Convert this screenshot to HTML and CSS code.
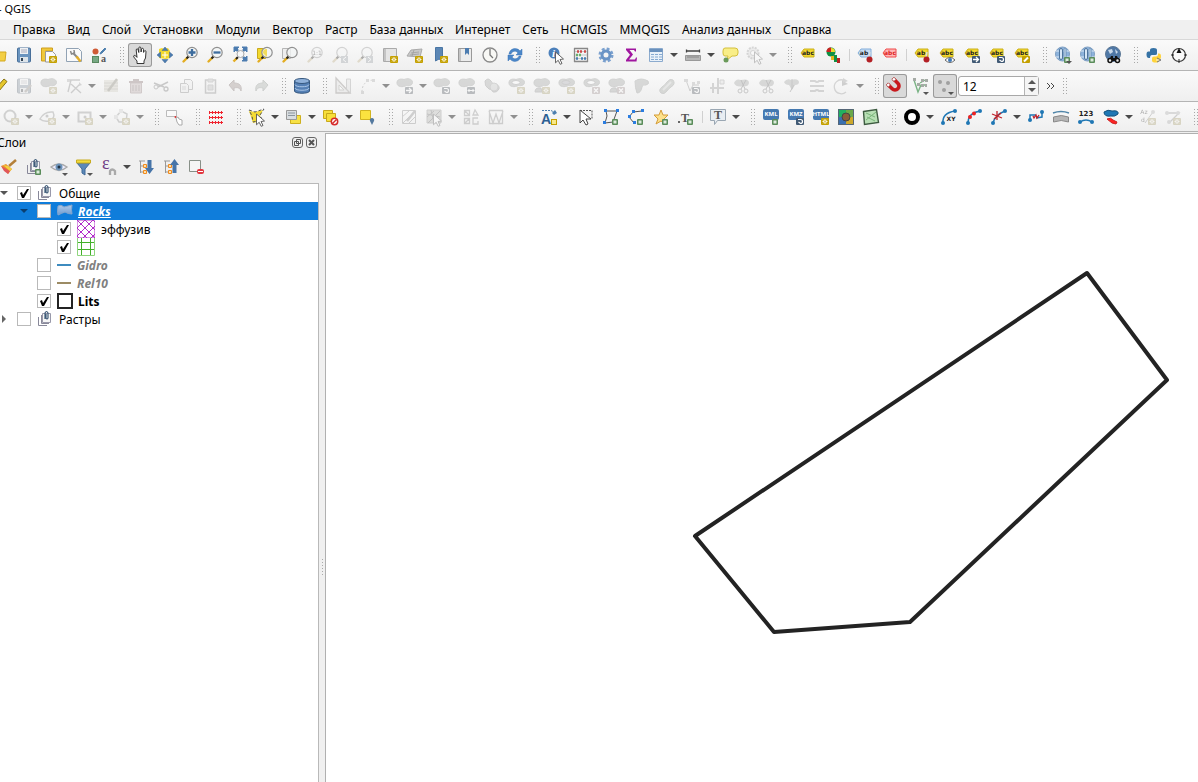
FILE: index.html
```html
<!DOCTYPE html>
<html lang="ru">
<head>
    <meta charset="utf-8">
    <meta name="viewport" content="width=device-width, initial-scale=1">
    <title>QGIS</title>
    <link rel="stylesheet" href="styles.css">
</head>
<body>
<svg class="sprite" aria-hidden="true">
    <defs>
        <linearGradient id="g-blue" x1="0" y1="0" x2="0" y2="1"><stop offset="0" stop-color="#b3cbe8"/><stop offset="1" stop-color="#6c9bd2"/></linearGradient>
        <pattern id="p-diag" width="8" height="8" patternUnits="userSpaceOnUse"><path d="M0 0l8 8M8 0L0 8" stroke="#b02fc9" stroke-width="1"/></pattern>
    </defs>

    <!-- badges -->
    <symbol id="b-star" viewBox="0 0 24 24"><rect x="12" y="13" width="8" height="7" rx="1" fill="#c4a000"/><path d="M16 14v5M13.500 16.500h5M14.200 14.700l3.600 3.600M17.800 14.700l-3.600 3.600" stroke="#fff" stroke-width=".9"/><circle cx="16" cy="16.500" r=".7" fill="#c4a000"/></symbol>
    <symbol id="b-plus" viewBox="0 0 24 24"><rect x="13" y="14" width="6" height="6" rx="1" fill="#5a8c5a"/><rect x="14.500" y="15.500" width="3" height="3" fill="#dcebdc"/></symbol>
    <symbol id="b-right" viewBox="0 0 24 24"><rect x="12" y="13" width="8" height="7" rx="1" fill="#415a75"/><path d="M13 16.500h5M16 14l2.500 2.500L16 19" stroke="#fff" stroke-width="1.300" fill="none"/></symbol>
    <symbol id="b-both" viewBox="0 0 24 24"><rect x="12" y="13" width="8" height="7" rx="1" fill="#415a75"/><path d="M13 16.500h6M14.500 15L13 16.500l1.500 1.500M17.500 15l1.500 1.500-1.500 1.500" stroke="#fff" fill="none"/></symbol>
    <symbol id="b-rot" viewBox="0 0 24 24"><rect x="12" y="13" width="8" height="7" rx="1" fill="#415a75"/><path d="M14 14.500h2.500a2 2 0 0 1 0 4L14.500 17" stroke="#fff" stroke-width="1.200" fill="none"/></symbol>
    <symbol id="b-x" viewBox="0 0 24 24"><rect x="12" y="13" width="8" height="7" rx="1" fill="#b88"/><path d="M14 14.500l4 4M18 14.500l-4 4" stroke="#fff" stroke-width="1.300"/></symbol>
    <symbol id="b-drop" viewBox="0 0 24 24"><path d="M15 18h6l-3 3z" fill="#555"/></symbol>
    <symbol id="tag" viewBox="0 0 24 24"><path d="M5 10l3-4h10v8H8z" fill="#f2d82c" stroke="#cbb01a"/></symbol>
    <symbol id="lens" viewBox="0 0 24 24"><path d="M5.500 18.500L10 14" stroke="#e3ad22" stroke-width="2.400" stroke-linecap="round"/><path d="M8.500 15.500l2-2" stroke="#222" stroke-width="2"/><circle cx="14" cy="9.500" r="5.200" fill="#f2f5f5" fill-opacity=".8" stroke="#909090" stroke-width="1.200"/></symbol>
    <symbol id="blob" viewBox="0 0 24 24"><path d="M4 9.500C3.500 5 8 4.500 11 5.500c3-1.500 8.500-1 8.500 3 0 3-4 3.500-6 3-4 2-9 1.500-9.500-2z" fill="#9ca39c" stroke="#8a918a"/></symbol>
    <symbol id="cursor" viewBox="0 0 24 24"><path d="M11.500 9l8 7-3.500.5 2 4-1.800.8-2-4-2.700 2.500z" fill="#fff" stroke="#555" stroke-width=".9"/></symbol>
    <symbol id="pencil" viewBox="0 0 24 24"><path d="M8 18l1-4 8-9 3 2.500-8 9.500z" fill="#e5c62c" stroke="#8a7514"/></symbol>

    <!-- project -->
    <symbol id="open" viewBox="0 0 24 24"><path d="M4 18V7h6l2 2h7l-1 9z" fill="#f3cf45" stroke="#d3a81f"/></symbol>
    <symbol id="save" viewBox="0 0 24 24"><rect x="5.500" y="5" width="13" height="14" rx="1" fill="#6a94bf" stroke="#486f99"/><path d="M8 5h8v6H8z" fill="#eef1f4"/><path d="M9 7h6M9 9h6" stroke="#aab"/><path d="M8 14h8v5H8z" fill="#dde4ea"/><path d="M9 15h2v3H9z" fill="#345"/></symbol>
    <symbol id="newproj" viewBox="0 0 24 24"><path d="M4.500 5h11v3h-7v10h-4z" fill="#f0c93b" stroke="#cf9e1c"/><path d="M8.500 8.500h7l3 3V19h-10z" fill="#fafafa" stroke="#999"/><use href="#b-star"/></symbol>
    <symbol id="layout" viewBox="0 0 24 24"><path d="M4.500 5.500h12l3 3V18.500h-15z" fill="#fafafa" stroke="#91a2b4"/><path d="M11 10l5 5" stroke="#888" stroke-width="2"/><path d="M14.500 13.500l4 5" stroke="#e3ae2a" stroke-width="2.500"/><path d="M8.500 8l1 3 3-1-.5-3" fill="none" stroke="#888" stroke-width="1.500"/></symbol>
    <symbol id="style" viewBox="0 0 24 24"><circle cx="8.500" cy="8.500" r="3" fill="#cf5a35"/><path d="M13 11l1-2 4-4 .8 1-3.800 4z" fill="#4d7fae" stroke="#4d7fae"/><rect x="5.500" y="13.500" width="6" height="6" fill="#77a883" stroke="#58885f"/></symbol>

    <!-- navigation -->
    <symbol id="hand" viewBox="0 0 24 24"><path d="M9 20.500v-2.500l-3.200-4c-.8-1.600 1-2.200 1.900-1.100l1.300 1.500-.8-7.400c0-1.600 1.800-1.700 2 0l.6 2.500V5c.1-1.500 2-1.500 2.100 0l.2 4 .4-2.800c.3-1.300 2-1.200 2 .2l.1 3 .6-1.200c.5-1.100 1.900-.6 1.800.6L17.500 15l-1.500 3v2.500z" fill="#fff" stroke="#222" stroke-width=".9"/></symbol>
    <symbol id="pansel" viewBox="0 0 24 24"><path d="M6 6l3-1 2 1 4-1 2 3v7l-4 1-7-1z" fill="#f2d92e"/><path d="M12 4l3 3.500H9zM12 20l3-3.500H9zM4 12l3.500-3v6zM20 12l-3.500-3v6z" fill="#4c7cb0" stroke="#3c6695" stroke-width=".5"/><path d="M12 9v6M9 12h6" stroke="#fff"/></symbol>
    <symbol id="zin" viewBox="0 0 24 24"><use href="#lens"/><path d="M14 6v7M10.500 9.500h7" stroke="#3e6d9e" stroke-width="2.300"/></symbol>
    <symbol id="zout" viewBox="0 0 24 24"><use href="#lens"/><path d="M10.500 9.500h7" stroke="#3e6d9e" stroke-width="2.300"/></symbol>
    <symbol id="zfull" viewBox="0 0 24 24"><path d="M6 4h5L6 9zM19 4v5l-5-5zM19 18h-5l5-5z" fill="#4c7cb0" stroke="#4c7cb0"/><path d="M7 5l3 3M18 5l-3 3M18 17l-3-3" stroke="#4c7cb0" stroke-width="2.500"/><path d="M5.500 18.500l4-4" stroke="#e3ad22" stroke-width="2.400"/><path d="M8 16l2-2" stroke="#222" stroke-width="2"/><circle cx="12.500" cy="11" r="3.500" fill="#f5f7f9" stroke="#aaa"/></symbol>
    <symbol id="zsel" viewBox="0 0 24 24"><path d="M4.500 5.500h8v10h-8z" fill="#f2d92e" stroke="#c9a91c"/><use href="#lens"/><path d="M10 10a4 4 0 0 1 4-4v8z" fill="#f2dc5a"/></symbol>
    <symbol id="zlayer" viewBox="0 0 24 24"><path d="M4.500 5.500h8v10h-8z" fill="#eee" stroke="#b5b5b5"/><use href="#lens"/></symbol>
    <symbol id="zlast" viewBox="0 0 24 24"><use href="#lens"/><rect x="13" y="13" width="7" height="7" fill="#8aa0b5"/><path d="M18 14l-3 2.500 3 2.500" stroke="#fff" fill="none"/></symbol>
    <symbol id="znext" viewBox="0 0 24 24"><use href="#lens"/><rect x="13" y="13" width="7" height="7" fill="#8aa0b5"/><path d="M15 14l3 2.500-3 2.500" stroke="#fff" fill="none"/></symbol>
    <symbol id="newmap" viewBox="0 0 24 24"><path d="M5.500 5.500h13v13h-13z" fill="#e5e5e5" stroke="#aaa"/><path d="M6 6h2v12H6z" fill="#c4c4c4"/><use href="#b-star"/></symbol>
    <symbol id="new3d" viewBox="0 0 24 24"><path d="M4 13l4-6 11-1-2 8z" fill="#c9c9c9" stroke="#aaa"/><path d="M8 10l8-1M7 12l9-1M11 7l-2 6" stroke="#999" stroke-width=".7"/><use href="#b-star"/></symbol>
    <symbol id="bookadd" viewBox="0 0 24 24"><path d="M7.500 4.500h7V18L11 16l-3.500 2z" fill="#5c87b5" stroke="#4a76a5"/><use href="#b-star"/></symbol>
    <symbol id="books" viewBox="0 0 24 24"><path d="M5.500 5.500h13v13h-13z" fill="#ececec" stroke="#999"/><path d="M6 6h2v12H6z" fill="#c4c4c4"/><path d="M12 5h4v7l-2-2-2 2z" fill="#4c7cb0"/></symbol>
    <symbol id="clock" viewBox="0 0 24 24"><circle cx="12" cy="12" r="7" fill="#f8f8f5" stroke="#898989" stroke-width="1.300"/><path d="M12 6v6l3 3" stroke="#777" fill="none" stroke-width="1.300"/></symbol>
    <symbol id="refresh" viewBox="0 0 24 24"><path d="M6 11c1-6 8-7 11-3l2-2v6h-6l2-2c-2-3-6-2-7 1zM18 13c-1 6-8 7-11 3l-2 2v-6h6l-2 2c2 3 6 2 7-1z" fill="#4b87c9" stroke="#3973b4" stroke-width=".5"/></symbol>

    <!-- attributes -->
    <symbol id="info" viewBox="0 0 24 24"><circle cx="10" cy="10" r="5.500" fill="#4c80bb"/><use href="#cursor"/></symbol>
    <symbol id="abacus" viewBox="0 0 24 24"><path d="M5.500 5v14M18.500 5v14M5 5.500h14M5 18.500h14" stroke="#888" stroke-width="1.300"/><path d="M6 8.500h12M6 12h12M6 15.500h12" stroke="#bbb" stroke-width=".8"/><path d="M8 8.500h5M15 8.500h3" stroke="#cc4a4a" stroke-width="2.500" stroke-dasharray="2 1"/><path d="M7 12h6" stroke="#6bb06b" stroke-width="2.500" stroke-dasharray="2 1"/><path d="M7 15.500h2M12 15.500h5" stroke="#487fb4" stroke-width="2.500" stroke-dasharray="2 1"/></symbol>
    <symbol id="gear" viewBox="0 0 24 24"><circle cx="12" cy="12" r="6" fill="none" stroke="#7ba1cf" stroke-width="3" stroke-dasharray="2.700 2"/><circle cx="12" cy="12" r="4" fill="none" stroke="#6a94c6" stroke-width="3"/></symbol>
    <symbol id="sigma" viewBox="0 0 24 24"><path d="M7 5.500h10v3h-1l-1-1.500h-4.500l3.500 4.500-4 5h6l1-2h1l-.5 4H7V17l4-5.200L7 7z" fill="#a0169f"/></symbol>
    <symbol id="table" viewBox="0 0 24 24"><path d="M5.500 5.500h13v13h-13z" fill="#e9f1f9" stroke="#8cabce"/><path d="M5.500 6h13v3h-13z" fill="#6a91bd"/><path d="M7 11.500h3M11 11.500h3M15 11.500h3M7 14h3M11 14h3M15 14h3M7 16.500h3M11 16.500h3M15 16.500h3" stroke="#86aad1"/></symbol>
    <symbol id="measure" viewBox="0 0 24 24"><path d="M5 8h14M5.500 6.500v3M18.500 6.500v3" stroke="#444" stroke-width="1.300"/><path d="M4.500 12.500h15v5h-15z" fill="#b6b6b6" stroke="#999"/><path d="M7 13v2M9 13v2M11 13v2M13 13v2M15 13v2M17 13v2" stroke="#777" stroke-width=".7"/></symbol>
    <symbol id="tip" viewBox="0 0 24 24"><path d="M7 5h10q3 0 3 3v2q0 3-3 3h-3l-5 4 1-4H7q-2 0-2-3V8q0-3 2-3z" fill="#f9ee88" stroke="#d4c03c"/><circle cx="8" cy="17" r="2.500" fill="#6a9a5a"/></symbol>
    <symbol id="locate" viewBox="0 0 24 24"><circle cx="10" cy="10" r="5.500" fill="#d8d8d8" stroke="#999" stroke-width="2" stroke-dasharray="2 1"/><circle cx="10" cy="10" r="2.500" fill="#fff" stroke="#999"/><use href="#cursor"/></symbol>

    <!-- labels -->
    <symbol id="pie" viewBox="0 0 24 24"><circle cx="10" cy="9" r="4.500" fill="#0f9144"/><path d="M10 9V5a4 4 0 0 1 4 4z" fill="#f2d92e"/><path d="M10 9H5.500A4 4 0 0 1 10 4.500z" fill="#c22"/><path d="M10 13h3v4h-3z" fill="#e3b81c"/><path d="M13 12h3v7h-3z" fill="#0f9144"/><path d="M16 15h3v5h-3z" fill="#b22"/></symbol>
    <symbol id="tagblue" viewBox="0 0 24 24"><path d="M5 10l3-4h10v8H8z" fill="#c7ddf3" stroke="#82addb"/></symbol>
    <symbol id="tagred" viewBox="0 0 24 24"><path d="M5 10l3-4h10v8H8z" fill="#ffb7b7" stroke="#f04b4b"/></symbol>
    <symbol id="pin" viewBox="0 0 24 24"><path d="M16 14l1-5" stroke="#ddd" stroke-width="1.500"/><circle cx="16.500" cy="16.500" r="3" fill="#b32025"/></symbol>
    <symbol id="tageye" viewBox="0 0 24 24"><use href="#tag"/><path d="M10 17q5-5 10 0-5 5-10 0z" fill="#fff" stroke="#666"/><circle cx="15" cy="17" r="2" fill="#3f79b8"/></symbol>
    <symbol id="tagmove" viewBox="0 0 24 24"><use href="#tag"/><use href="#b-right"/></symbol>
    <symbol id="tagrot" viewBox="0 0 24 24"><use href="#tag"/><use href="#b-rot"/></symbol>
    <symbol id="tagedit" viewBox="0 0 24 24"><use href="#tag"/><rect x="12" y="13" width="8" height="7" rx="1" fill="#c4a000"/><path d="M14 18.500l4-4" stroke="#fff" stroke-width="2"/></symbol>

    <!-- web and plugins -->
    <symbol id="globe" viewBox="0 0 24 24"><circle cx="11.500" cy="11" r="7" fill="#8db3dc" stroke="#7f9fc2"/><path d="M5 8h13M5 14h13" stroke="#dce9f5"/><rect x="8.500" y="5.500" width="3" height="11" rx="1.500" fill="#d7e7f7" stroke="#4f759d"/><rect x="13" y="5.500" width="2" height="11" rx="1" fill="#d7e7f7" stroke="#6f93b8"/></symbol>
    <symbol id="globeadd" viewBox="0 0 24 24"><use href="#globe"/><use href="#b-plus"/><use href="#b-drop"/></symbol>
    <symbol id="globesearch" viewBox="0 0 24 24"><use href="#globe"/><use href="#b-plus"/></symbol>
    <symbol id="binoc" viewBox="0 0 24 24"><circle cx="12" cy="11" r="7.500" fill="#4f78a6" stroke="#5c7896"/><path d="M7 7l4-1 1 3-3 2zM14 6l3 3-2 2z" fill="#c9d9ea"/><path d="M8 18l2-5h2v2h2v-2h2l2 5z" fill="#111"/><circle cx="9" cy="17.500" r="2" fill="#eee" stroke="#111" stroke-width="1.500"/><circle cx="16.500" cy="17.500" r="2" fill="#eee" stroke="#111" stroke-width="1.500"/></symbol>
    <symbol id="python" viewBox="0 0 24 24"><path d="M8 8.500V7q0-2 3.500-2T15 7v3.500q0 1.500-2 1.500h-3q-2 0-2 3H7q-2.500 0-2.500-3.500T7 8.500h4.500" fill="#3572a5"/><path d="M10 15.500v2q0 2 3.500 2t3.500-2h-3v-1h3q2 0 2-3t-2-3h-1v1q0 2-2 2h-2q-2 0-2 2z" fill="#ffd43b"/><path d="M15 15l4 2-4 2" fill="none" stroke="#777"/></symbol>
    <symbol id="compass" viewBox="0 0 24 24"><circle cx="12" cy="12" r="6.500" fill="#fafafa" stroke="#333" stroke-width="1.200"/><path d="M12 5l2.500 5h-5z" fill="#111"/><path d="M12 16v4M4 12h3M17 12h3" stroke="#222"/></symbol>

    <!-- digitizing -->
    <symbol id="savee" viewBox="0 0 24 24"><use href="#save"/><path d="M13 18l6-7" stroke="#987" stroke-width="2.500"/></symbol>
    <symbol id="blobstar" viewBox="0 0 24 24"><use href="#blob"/><use href="#b-star"/></symbol>
    <symbol id="vertex" viewBox="0 0 24 24"><path d="M6 6h12M6 18L9 6M9 10l10 9M18 10l-9 9" stroke="#888" stroke-width="1.400"/><rect x="5" y="5" width="3" height="3" fill="#aaa"/><path d="M17 8l3 3-3 1z" fill="#999"/></symbol>
    <symbol id="multiedit" viewBox="0 0 24 24"><path d="M5 6h14v12H5z" fill="#d9cfa8"/><path d="M5 9h14M5 12h14M5 15h14" stroke="#b0a67c"/><path d="M9 17l9-12" stroke="#8a8050" stroke-width="2.500"/></symbol>
    <symbol id="trash" viewBox="0 0 24 24"><path d="M6.500 9h11v10h-11z" fill="#dba5a5" stroke="#b57777"/><path d="M5 8h14M9 6h6" stroke="#a66" stroke-width="2"/><path d="M9 11v6M12 11v6M15 11v6" stroke="#966"/></symbol>
    <symbol id="cut" viewBox="0 0 24 24"><path d="M5 9l10 4M19 8L9 13" stroke="#777" stroke-width="1.500"/><circle cx="17" cy="15" r="2" fill="none" stroke="#777" stroke-width="1.300"/><circle cx="7" cy="13" r="2" fill="none" stroke="#777"/></symbol>
    <symbol id="copy" viewBox="0 0 24 24"><path d="M10.500 5.500h6l2 2v8h-8z" fill="#eee" stroke="#888"/><path d="M6.500 9.500h6l2 2v7h-8z" fill="#eee" stroke="#888"/><path d="M8 13h4M8 15h4" stroke="#aaa"/></symbol>
    <symbol id="paste" viewBox="0 0 24 24"><path d="M6.500 6h10v13h-10z" fill="#eee" stroke="#888" stroke-width="1.500"/><path d="M9 5h5v3H9zM9 11h5v5H9z" fill="#bbb" stroke="#999"/></symbol>
    <symbol id="undo" viewBox="0 0 24 24"><path d="M5 11l5-5v3c6 0 8 3 7 8-1-3-3-4-7-3v3z" fill="#b5857a" stroke="#97685f"/></symbol>
    <symbol id="redo" viewBox="0 0 24 24"><path d="M19 11l-5-5v3c-6 0-8 3-7 8 1-3 3-4 7-3v3z" fill="#9db0a0" stroke="#7d9181"/></symbol>
    <symbol id="db" viewBox="0 0 24 24"><path d="M4.500 7v10c0 3 15 3 15 0V7z" fill="#5580b5" stroke="#36587f"/><ellipse cx="12" cy="7" rx="7.500" ry="2.500" fill="#8fb1da" stroke="#36587f"/><path d="M5 10.500c0 3 14 3 14 0M5 14c0 3 14 3 14 0" fill="none" stroke="#a9c5e6"/></symbol>
    <symbol id="setsq" viewBox="0 0 24 24"><path d="M5 4v15h14z" fill="#ddd" stroke="#8d7d72" stroke-width="1.300"/><path d="M8 11v5h5z" fill="#fff" stroke="#998"/><path d="M15.500 5h4v14l-4-4z" fill="#ddd" stroke="#999"/></symbol>
    <symbol id="curve" viewBox="0 0 24 24"><path d="M6 18Q6 7 17 6" fill="none" stroke="#888" stroke-dasharray="2 2"/><path d="M5 17h3v3H5zM10 5h3v3h-3zM16 5h3v3h-3z" fill="#aaa"/></symbol>
    <symbol id="blobmove" viewBox="0 0 24 24"><use href="#blob"/><use href="#b-right"/></symbol>
    <symbol id="blobboth" viewBox="0 0 24 24"><use href="#blob"/><use href="#b-both"/></symbol>
    <symbol id="blobrot" viewBox="0 0 24 24"><use href="#blob"/><use href="#b-rot"/></symbol>
    <symbol id="ringx" viewBox="0 0 24 24"><use href="#blob"/><ellipse cx="11" cy="8.500" rx="4" ry="2" fill="#fff" stroke="#888"/><use href="#b-x"/></symbol>
    <symbol id="simplify" viewBox="0 0 24 24"><path d="M5 7q3-4 6 0 1 3 4 3 5 1 4 5-2 4-6 3-1-3-4-3-5-3-4-8z" fill="#a0a6a0" stroke="#888"/><circle cx="14" cy="13" r="4" fill="#c2c6c2" stroke="#999"/></symbol>
    <symbol id="ring" viewBox="0 0 24 24"><use href="#blob"/><ellipse cx="11" cy="8.500" rx="4" ry="2" fill="#fff" stroke="#888"/><use href="#b-star"/></symbol>
    <symbol id="ringfill" viewBox="0 0 24 24"><use href="#blob"/><ellipse cx="11" cy="8.500" rx="4" ry="2" fill="#aab" stroke="#888"/><use href="#b-star"/></symbol>
    <symbol id="part" viewBox="0 0 24 24"><use href="#blob"/><path d="M5 18q0-5 6-4l1 4z" fill="#a0a6a0" stroke="#888"/><use href="#b-star"/></symbol>
    <symbol id="partx" viewBox="0 0 24 24"><use href="#blob"/><path d="M5 18q0-5 6-4l1 4z" fill="#a0a6a0" stroke="#888"/><use href="#b-x"/></symbol>
    <symbol id="reshape" viewBox="0 0 24 24"><path d="M5 7q6-4 13 0 2 3-2 4-4-1-4 2-1 6-5 6-2-5-2-12z" fill="#9ca39c" stroke="#8a918a"/></symbol>
    <symbol id="offset" viewBox="0 0 24 24"><path d="M6 19q-3-3 1-6 3-2 5-5 3-4 6-2 3 4-2 7-3 2-4 4-3 4-6 2z" fill="#9cab98" stroke="#8a918a"/><path d="M8 16q4-4 8-8" stroke="#c9cfc9" stroke-width="2"/></symbol>
    <symbol id="nodes" viewBox="0 0 24 24"><path d="M6 6l4 11 3-6h6" stroke="#888" fill="none"/><path d="M4 5h4v3H4zM12 8h3v3h-3zM17 7h3v3h-3z" fill="#aaa"/><use href="#b-rot"/></symbol>
    <symbol id="trim" viewBox="0 0 24 24"><path d="M5 14h14M13 4v16M8 9v10" stroke="#999" stroke-width="2"/><path d="M15 6h4v4h-4z" fill="#ddd" stroke="#999"/></symbol>
    <symbol id="split" viewBox="0 0 24 24"><path d="M4 9q2-5 7-3 8-2 8 3-1 4-5 3-8 2-10-3z" fill="#9ca39c"/><path d="M11 6l4 9M16 6l-5 9" stroke="#666"/><circle cx="10" cy="17" r="2" fill="none" stroke="#777"/><circle cx="16" cy="17" r="2" fill="none" stroke="#777"/></symbol>
    <symbol id="merge" viewBox="0 0 24 24"><path d="M4 8q3-4 7-2 7-2 8 2 0 3-4 3l-3 5-3-5q-4 0-5-3z" fill="#9ca39c"/><path d="M12 5v10M14 11l-4 7" stroke="#777"/></symbol>
    <symbol id="align" viewBox="0 0 24 24"><path d="M5 7h5q2 2 4 0h5M5 12h14M5 17h5q2-2 4 0h5" stroke="#999" stroke-width="2" fill="none"/></symbol>
    <symbol id="rotsym" viewBox="0 0 24 24"><path d="M16 18A7 7 0 1 1 13 6" fill="none" stroke="#999" stroke-width="1.300"/><path d="M12 6v6l6-2z" fill="#888"/><path d="M13 4l5 3-5 2" fill="#999"/></symbol>

    <!-- snapping -->
    <symbol id="magnet" viewBox="0 0 24 24"><g transform="rotate(-45 12 12)"><path d="M8 6v6a4 4 0 0 0 8 0V6" fill="none" stroke="#c8191d" stroke-width="3.600"/><path d="M6.500 5h3v3h-3zM14.500 5h3v3h-3z" fill="#fff" stroke="#a44" stroke-width=".8"/></g></symbol>
    <symbol id="snapv" viewBox="0 0 24 24"><path d="M6 6l4 12 3-7h6M12 9l5-3" stroke="#7ab384" stroke-width="1.400" fill="none"/><path d="M5 4h3v3H5zM9 9h3v3H9zM13 5h3v3h-3zM17 5h3v3h-3zM13 10h3v3h-3zM17 10h2v3h-2z" fill="#a5aaa5"/><use href="#b-drop"/></symbol>
    <symbol id="snapdots" viewBox="0 0 24 24"><circle cx="7" cy="8" r="2" fill="#a0a0a0"/><circle cx="15" cy="9" r="2" fill="#a0a0a0"/><circle cx="11" cy="16" r="2" fill="#a0a0a0"/><use href="#b-drop"/></symbol>

    <!-- shapes and selection -->
    <symbol id="circ" viewBox="0 0 24 24"><circle cx="11" cy="11" r="5.500" fill="none" stroke="#8a8f8a" stroke-width="2"/><use href="#b-star"/></symbol>
    <symbol id="ell" viewBox="0 0 24 24"><path d="M4 14Q8 6 17 7q3 6-4 9-6 1-9-2z" fill="none" stroke="#8a8f8a" stroke-width="1.500"/><circle cx="11" cy="11" r="1.500" fill="#888"/><use href="#b-star"/></symbol>
    <symbol id="rectd" viewBox="0 0 24 24"><path d="M5.500 7.500h12v9h-12z" fill="none" stroke="#8a8f8a" stroke-width="2"/><circle cx="12" cy="12" r="1.500" fill="#888"/><use href="#b-star"/></symbol>
    <symbol id="poly" viewBox="0 0 24 24"><path d="M6 12l5-6 6 3-1 8H9z" fill="none" stroke="#8a8f8a" stroke-width="1.500"/><path d="M4 10h4v4H4zM9 4h4v4H9z" fill="#ccc"/><use href="#b-star"/></symbol>
    <symbol id="taptool" viewBox="0 0 24 24"><path d="M3.500 5.500h10v6h-10z" fill="#fafafa" stroke="#bbb"/><circle cx="12.500" cy="12" r="1" fill="#d33"/><path d="M13 13l1 4 2 3h3v-5l-3-1-1-2z" fill="#fff" stroke="#aaa"/></symbol>
    <symbol id="redgrid" viewBox="0 0 24 24"><path d="M5 7.500h14M5 12.500h14M5 17.500h14" stroke="#f0222d"/><path d="M5 7.500h14M5 12.500h14M5 17.500h14" stroke="#f0222d" stroke-width="3" stroke-dasharray="1 2"/></symbol>
    <symbol id="selpoly" viewBox="0 0 24 24"><path d="M4 6l6 1 8-2-3 6 2 5-9 2-2-6z" fill="#f3db35"/><path d="M4 5l6 2 9-3-4 6 2 5-9 2-1-6z" fill="none" stroke="#555" stroke-dasharray="3 2"/><use href="#cursor"/></symbol>
    <symbol id="selform" viewBox="0 0 24 24"><path d="M8.500 10.500h10v8h-10z" fill="#f7e145" stroke="#ceb01f"/><path d="M4.500 5.500h10v9h-10z" fill="#d9dde0" stroke="#999"/><path d="M6 8h7M6 10.500h7" stroke="#8a959e"/></symbol>
    <symbol id="desel" viewBox="0 0 24 24"><path d="M4.500 5.500h9v8h-9z" fill="#f7df3a" stroke="#c8a81c"/><path d="M7.500 8.500h9v8h-9z" fill="#f7df3a" stroke="#c8a81c"/><circle cx="15.500" cy="16.500" r="3.200" fill="#fff" stroke="#d62b2b" stroke-width="1.500"/><path d="M13.500 18.500l4-4" stroke="#d62b2b" stroke-width="1.500"/></symbol>
    <symbol id="selloc" viewBox="0 0 24 24"><path d="M4.500 5.500h10v9h-10z" fill="#fbe33f" stroke="#d1b421"/><path d="M16 20l-2-4a2.200 2.200 0 1 1 4 0z" fill="#54799f"/></symbol>
    <symbol id="mesh" viewBox="0 0 24 24"><path d="M5.500 5.500h13v13h-13zM5 12l7-6M6 18L18 6M12 18l6-6" fill="none" stroke="#888"/><path d="M10 16l8-10" stroke="#888" stroke-width="2.500"/></symbol>
    <symbol id="meshsel" viewBox="0 0 24 24"><path d="M5 5h14v13H5z" fill="#b5b5a5" stroke="#888"/><path d="M5 12l7-6M6 18L18 6M9 5l3 13M5 9l13 3" stroke="#666" fill="none"/><use href="#cursor"/></symbol>
    <symbol id="meshrot" viewBox="0 0 24 24"><path d="M5.500 5.500h5v5h-5zM5.500 13.500h5v5h-5zM6 6l4 4M6 18l4-4M14 10l2-5 3 5zM19 13h-5v6h5v-3" fill="none" stroke="#888" stroke-width="1.300"/></symbol>
    <symbol id="meshw" viewBox="0 0 24 24"><path d="M5.500 5.500h13v13h-13zM5 6l4 12 3-9 3 9 4-12" fill="none" stroke="#888" stroke-width="1.300"/></symbol>

    <!-- annotations -->
    <symbol id="textnew" viewBox="0 0 24 24"><path d="M5 5.500h9l4 2" stroke="#4d7fae" stroke-dasharray="2 1" fill="none"/><path d="M15 8l3-3 2 3-3 2z" fill="#4d7fae"/><rect x="14.500" y="14.500" width="5" height="5" fill="#f7e88a" stroke="#c4a000"/></symbol>
    <symbol id="modann" viewBox="0 0 24 24"><path d="M6 5.500h12v9" fill="none" stroke="#555" stroke-dasharray="2 1"/><path d="M6 5v13l3-3 3 5 2-1-2-5h5z" fill="#fff" stroke="#444"/></symbol>
    <symbol id="polyann" viewBox="0 0 24 24"><path d="M7 6h11l-4 11-8 1 2-7z" fill="none" stroke="#555"/><path d="M5 4h3v3H5zM17 4h3v3h-3zM4 16h3v3H4z" fill="#2b7de0"/><use href="#b-plus"/></symbol>
    <symbol id="lineann" viewBox="0 0 24 24"><path d="M18 6L9 7l-4 5 5 6" fill="none" stroke="#555"/><path d="M17 4h3v3h-3zM8 5h3v3H8zM4 10h3v3H4zM9 16h3v3H9z" fill="#2b7de0"/><use href="#b-plus"/></symbol>
    <symbol id="starann" viewBox="0 0 24 24"><path d="M12 5l2 5h5l-4 4 1 5-4-3-5 3 2-5-4-4h5z" fill="#fde18a" stroke="#d49c38"/><use href="#b-plus"/></symbol>
    <symbol id="tann" viewBox="0 0 24 24"><path d="M4 17h2" stroke="#666" stroke-width="2"/><use href="#b-plus"/></symbol>
    <symbol id="balloon" viewBox="0 0 24 24"><path d="M4.500 4.500h15v11h-8l-3 4v-4h-4z" fill="#e8edf2" stroke="#9aa7b3"/></symbol>

    <!-- export -->
    <symbol id="kml" viewBox="0 0 24 24"><rect x="4" y="4" width="16" height="11" rx="2" fill="#4579b0"/><use href="#b-plus"/></symbol>
    <symbol id="kmz" viewBox="0 0 24 24"><rect x="4" y="4" width="16" height="11" rx="2" fill="#4579b0"/><use href="#b-rot"/></symbol>
    <symbol id="html" viewBox="0 0 24 24"><rect x="4" y="4" width="16" height="11" rx="2" fill="#4579b0"/><use href="#b-star"/></symbol>
    <symbol id="tiles" viewBox="0 0 24 24"><path d="M4 4h8v8H4z" fill="#22b060"/><path d="M12 4h8v8h-8z" fill="#6aa84a"/><path d="M4 12h8v8H4z" fill="#3a70b0"/><path d="M12 12h8v8h-8z" fill="#cda82b"/><circle cx="12" cy="12" r="4" fill="#8a5c3a" stroke="#444"/><path d="M4.500 4.500h15v15h-15z" fill="none" stroke="#567"/></symbol>
    <symbol id="map" viewBox="0 0 24 24"><path d="M4.500 6.500l13-2 2 13-14 2z" fill="#b8dfb5" stroke="#3d5a40" stroke-width="1.400"/><path d="M7 8l9 4M7 15l10-8M8 12l8 4" stroke="#79b57a"/></symbol>

    <!-- geometry plugin -->
    <symbol id="oring" viewBox="0 0 24 24"><circle cx="12" cy="12" r="6" fill="#fff" stroke="#000" stroke-width="4"/></symbol>
    <symbol id="arcxy" viewBox="0 0 24 24"><path d="M6 18Q5 8 18 6" fill="none" stroke="#1f77b4" stroke-width="1.500"/><circle cx="6" cy="18" r="2" fill="#1f77b4"/><circle cx="18" cy="6" r="2" fill="#1f77b4"/></symbol>
    <symbol id="arcpts" viewBox="0 0 24 24"><path d="M6 18Q6 8 18 6" fill="none" stroke="#1f77b4" stroke-width="1.500"/><circle cx="6" cy="18" r="2" fill="#1f77b4"/><circle cx="18" cy="6" r="2" fill="#1f77b4"/><circle cx="8" cy="12" r="2" fill="#e22"/><circle cx="12" cy="8.500" r="2" fill="#e22"/></symbol>
    <symbol id="arcx" viewBox="0 0 24 24"><path d="M6 18Q8 10 18 6" fill="none" stroke="#1f77b4" stroke-width="1.500"/><circle cx="6" cy="18" r="2" fill="#1f77b4"/><circle cx="18" cy="6" r="2" fill="#1f77b4"/><path d="M10 6v9M5 9l10 4M14 8l-7 6" stroke="#c0222a" stroke-width="1.300"/></symbol>
    <symbol id="zig" viewBox="0 0 24 24"><path d="M6 15V10h6M12 13l6-1V7" fill="none" stroke="#1f77b4" stroke-width="1.500"/><circle cx="6" cy="15" r="2" fill="#1f77b4"/><circle cx="18" cy="7" r="2" fill="#1f77b4"/><path d="M9 11l1 2 2-3 1 3 2-3" fill="none" stroke="#c0222a" stroke-width="1.300"/></symbol>
    <symbol id="band" viewBox="0 0 24 24"><path d="M4 8q8-3 16 0" fill="none" stroke="#4f85a8" stroke-width="1.500"/><path d="M4.500 12q8-3 15 0v5q-7-3-15 0z" fill="#b5b5b5" stroke="#888"/></symbol>
    <symbol id="num" viewBox="0 0 24 24"><path d="M6 17q6-4 12 0" fill="none" stroke="#1f77b4" stroke-width="1.500"/><circle cx="6" cy="17" r="2" fill="#1f77b4"/><circle cx="18" cy="17" r="2" fill="#1f77b4"/></symbol>
    <symbol id="blobs" viewBox="0 0 24 24"><path d="M5 7q4-3 8-1 7-1 6 3-3 3-7 2-7 1-7-4z" fill="#1f77b4" stroke="#15527c"/><path d="M8 14q4-2 6 1l4 2-1 2-4-1z" fill="#f22" stroke="#c22"/></symbol>
    <symbol id="azd" viewBox="0 0 24 24"><path d="M9 18l8-11" stroke="#888"/><circle cx="17" cy="7" r="2" fill="#aaa"/><use href="#b-star"/></symbol>
    <symbol id="linen" viewBox="0 0 24 24"><path d="M6 8h12L8 18" fill="none" stroke="#888" stroke-width="1.300"/><circle cx="6" cy="8" r="2" fill="#aaa"/><circle cx="17" cy="8" r="2" fill="#aaa"/><circle cx="8" cy="17" r="2" fill="#aaa"/><use href="#b-star"/></symbol>

    <!-- layers panel -->
    <symbol id="brush" viewBox="0 0 24 24"><path d="M4 11l5-2 6 5-4 5z" fill="#e8902e"/><path d="M4 11l3 5 4 3 2-3z" fill="#e0575a"/><path d="M6 10l5 1 4 3-2 2z" fill="#f5d040"/><path d="M12 11l7-6" stroke="#b48039" stroke-width="2.500"/></symbol>
    <symbol id="group" viewBox="0 0 24 24"><path d="M5.500 10v8.500h8.500M8.500 8v8.500h7.500" fill="none" stroke="#889" /><path d="M9.500 6.500h8v9h-8z" fill="#f6f6f6" stroke="#99a"/><path d="M12 12V6q1.500-3 3 0v5q-1 2-2 0V7" fill="none" stroke="#3d5a78" stroke-width="1.200"/></symbol>
    <symbol id="groupadd" viewBox="0 0 24 24"><use href="#group"/><use href="#b-plus"/></symbol>
    <symbol id="eye" viewBox="0 0 24 24"><path d="M4 12q8-6 16 0-8 7-16 0z" fill="#eef" stroke="#aaa" stroke-width="1.400"/><circle cx="12" cy="12" r="3.500" fill="#6d93b8"/><circle cx="12" cy="12" r="1.500" fill="#234"/><use href="#b-drop"/></symbol>
    <symbol id="funnel" viewBox="0 0 24 24"><path d="M5 8h13l-5 6v6l-3-2v-4z" fill="#5c88b8" stroke="#3f6a99"/><path d="M4.500 5h14v3h-14z" fill="#f2dc3c" stroke="#c9ac20"/><use href="#b-drop"/></symbol>
    <symbol id="eps" viewBox="0 0 24 24"><path d="M13 20v-4q2-3 5 0v4" fill="none" stroke="#aaa" stroke-width="2.300"/></symbol>
    <symbol id="expand" viewBox="0 0 24 24"><path d="M5 6h6M6.500 6v12M7 11h4M7 17h4" stroke="#999"/><path d="M9.500 9.500h3v3h-3zM9.500 15.500h3v3h-3z" fill="#fce0b0" stroke="#f08b1d"/><path d="M13.500 5h4v8h2.500l-4.500 6-4.500-6h2.500z" fill="#4674a8"/></symbol>
    <symbol id="collapse" viewBox="0 0 24 24"><path d="M5 6h6M6.500 6v12M7 11h4M7 17h4" stroke="#999"/><path d="M9.500 9.500h3v3h-3zM9.500 15.500h3v3h-3z" fill="#fce0b0" stroke="#f08b1d"/><path d="M13.500 18h4v-8h2.500l-4.500-6-4.500 6h2.500z" fill="#4674a8"/></symbol>
    <symbol id="removel" viewBox="0 0 24 24"><path d="M5.500 5.500h11v11h-11z" fill="#f5f5f5" stroke="#889088"/><rect x="13" y="14" width="7" height="5" rx="2" fill="#e2373f"/><path d="M14 16.500h5" stroke="#fff"/></symbol>
</svg>

<header class="titlebar">- QGIS</header>
<nav class="menubar">
    <a href="#">Правка</a>
    <a href="#">Вид</a>
    <a href="#">Слой</a>
    <a href="#">Установки</a>
    <a href="#">Модули</a>
    <a href="#">Вектор</a>
    <a href="#">Растр</a>
    <a href="#">База данных</a>
    <a href="#">Интернет</a>
    <a href="#">Сеть</a>
    <a href="#">HCMGIS</a>
    <a href="#">MMQGIS</a>
    <a href="#">Анализ данных</a>
    <a href="#">Справка</a>
</nav>

<div class="toolbar shifted">
    <button class="tool" aria-label="Открыть"><svg><use href="#open"/></svg></button>
    <button class="tool" aria-label="Сохранить"><svg><use href="#save"/></svg></button>
    <button class="tool" aria-label="Новый макет"><svg><use href="#newproj"/></svg></button>
    <button class="tool" aria-label="Менеджер макетов"><svg><use href="#layout"/></svg></button>
    <button class="tool" aria-label="Стили"><svg><use href="#style"/><text x="14" y="19" class="t-serif">a</text></svg></button>
    <span class="grip"></span>
    <button class="tool pressed" aria-label="Прокрутка карты"><svg><use href="#hand"/></svg></button>
    <button class="tool" aria-label="К выделению"><svg><use href="#pansel"/></svg></button>
    <button class="tool" aria-label="Увеличить"><svg><use href="#zin"/></svg></button>
    <button class="tool" aria-label="Уменьшить"><svg><use href="#zout"/></svg></button>
    <button class="tool" aria-label="Полный охват"><svg><use href="#zfull"/></svg></button>
    <button class="tool" aria-label="Увеличить до выделения"><svg><use href="#zsel"/></svg></button>
    <button class="tool" aria-label="Увеличить до слоя"><svg><use href="#zlayer"/></svg></button>
    <button class="tool" disabled aria-label="Реальный размер"><svg><use href="#lens"/><text x="14" y="12" class="t-tiny">1:1</text></svg></button>
    <button class="tool" disabled aria-label="Предыдущий охват"><svg><use href="#zlast"/></svg></button>
    <button class="tool" disabled aria-label="Следующий охват"><svg><use href="#znext"/></svg></button>
    <button class="tool" aria-label="Новая карта"><svg><use href="#newmap"/></svg></button>
    <button class="tool" aria-label="Новая 3D карта"><svg><use href="#new3d"/></svg></button>
    <button class="tool" aria-label="Новая закладка"><svg><use href="#bookadd"/></svg></button>
    <button class="tool" aria-label="Закладки"><svg><use href="#books"/></svg></button>
    <button class="tool" aria-label="Время"><svg><use href="#clock"/></svg></button>
    <button class="tool" aria-label="Обновить"><svg><use href="#refresh"/></svg></button>
    <span class="grip"></span>
    <button class="tool" aria-label="Определить объекты"><svg><use href="#info"/><text x="8" y="14" class="t-info">i</text></svg></button>
    <button class="tool" aria-label="Калькулятор полей"><svg><use href="#abacus"/></svg></button>
    <button class="tool" aria-label="Обработка"><svg><use href="#gear"/></svg></button>
    <button class="tool" aria-label="Статистика"><svg><use href="#sigma"/></svg></button>
    <button class="tool drop" aria-label="Таблица атрибутов"><svg><use href="#table"/></svg></button>
    <button class="tool drop" aria-label="Измерить"><svg><use href="#measure"/></svg></button>
    <button class="tool" aria-label="Подсказки"><svg><use href="#tip"/></svg></button>
    <button class="tool drop" disabled aria-label="Действия"><svg><use href="#locate"/></svg></button>
    <span class="grip"></span>
    <button class="tool" aria-label="Подписи"><svg><use href="#tag"/><text x="12" y="12" class="t-tag">abc</text></svg></button>
    <button class="tool" aria-label="Диаграммы"><svg><use href="#pie"/></svg></button>
    <span class="sep"></span>
    <button class="tool" aria-label="Закреплённые"><svg><use href="#tagblue"/><text x="11" y="12" class="t-tag">ab</text><use href="#pin"/></svg></button>
    <button class="tool" aria-label="Неразмещённые"><svg><use href="#tagred"/><text x="12" y="12" class="t-tag t-red">abc</text></svg></button>
    <span class="sep"></span>
    <button class="tool" aria-label="Закрепить подпись"><svg><use href="#tag"/><text x="11" y="12" class="t-tag">ab</text><use href="#pin"/></svg></button>
    <button class="tool" aria-label="Показать подпись"><svg><use href="#tageye"/><text x="12" y="12" class="t-tag">abc</text></svg></button>
    <button class="tool" aria-label="Переместить подпись"><svg><use href="#tagmove"/><text x="12" y="12" class="t-tag">abc</text></svg></button>
    <button class="tool" aria-label="Повернуть подпись"><svg><use href="#tagrot"/><text x="12" y="12" class="t-tag">abc</text></svg></button>
    <button class="tool" aria-label="Изменить подпись"><svg><use href="#tagedit"/><text x="12" y="12" class="t-tag">abc</text></svg></button>
    <span class="grip"></span>
    <button class="tool" aria-label="Добавить слой из сети"><svg><use href="#globeadd"/></svg></button>
    <button class="tool" aria-label="Поиск слоёв"><svg><use href="#globesearch"/></svg></button>
    <button class="tool" aria-label="Каталог"><svg><use href="#binoc"/></svg></button>
    <span class="grip"></span>
    <button class="tool" aria-label="Python"><svg><use href="#python"/></svg></button>
    <button class="tool" aria-label="Азимут"><svg><use href="#compass"/></svg></button>
</div>

<div class="toolbar shifted">
    <button class="tool" aria-label="Правка"><svg><use href="#pencil"/></svg></button>
    <button class="tool" disabled aria-label="Сохранить правки"><svg><use href="#savee"/></svg></button>
    <button class="tool" disabled aria-label="Добавить полигон"><svg><use href="#blobstar"/></svg></button>
    <button class="tool drop" disabled aria-label="Вершины"><svg><use href="#vertex"/></svg></button>
    <button class="tool" disabled aria-label="Изменить атрибуты"><svg><use href="#multiedit"/></svg></button>
    <button class="tool" disabled aria-label="Удалить"><svg><use href="#trash"/></svg></button>
    <button class="tool" disabled aria-label="Вырезать"><svg><use href="#cut"/></svg></button>
    <button class="tool" disabled aria-label="Копировать"><svg><use href="#copy"/></svg></button>
    <button class="tool" disabled aria-label="Вставить"><svg><use href="#paste"/></svg></button>
    <button class="tool" disabled aria-label="Отменить"><svg><use href="#undo"/></svg></button>
    <button class="tool" disabled aria-label="Повторить"><svg><use href="#redo"/></svg></button>
    <span class="grip"></span>
    <button class="tool" aria-label="База данных"><svg><use href="#db"/></svg></button>
    <span class="grip"></span>
    <button class="tool" disabled aria-label="САПР"><svg><use href="#setsq"/></svg></button>
    <button class="tool drop" disabled aria-label="Кривая"><svg><use href="#curve"/></svg></button>
    <button class="tool drop" disabled aria-label="Переместить"><svg><use href="#blobmove"/></svg></button>
    <button class="tool" disabled aria-label="Повернуть"><svg><use href="#blobrot"/></svg></button>
    <button class="tool" disabled aria-label="Масштабировать"><svg><use href="#blobboth"/></svg></button>
    <button class="tool" disabled aria-label="Упростить"><svg><use href="#simplify"/></svg></button>
    <button class="tool" disabled aria-label="Добавить кольцо"><svg><use href="#ring"/></svg></button>
    <button class="tool" disabled aria-label="Добавить часть"><svg><use href="#part"/></svg></button>
    <button class="tool" disabled aria-label="Заполнить кольцо"><svg><use href="#ringfill"/></svg></button>
    <button class="tool" disabled aria-label="Удалить кольцо"><svg><use href="#ringx"/></svg></button>
    <button class="tool" disabled aria-label="Удалить часть"><svg><use href="#partx"/></svg></button>
    <button class="tool" disabled aria-label="Изменить форму"><svg><use href="#reshape"/></svg></button>
    <button class="tool" disabled aria-label="Сместить кривую"><svg><use href="#offset"/></svg></button>
    <button class="tool" disabled aria-label="Обратить линию"><svg><use href="#nodes"/></svg></button>
    <button class="tool" disabled aria-label="Обрезать"><svg><use href="#trim"/></svg></button>
    <button class="tool" disabled aria-label="Разбить объекты"><svg><use href="#split"/></svg></button>
    <button class="tool" disabled aria-label="Разбить части"><svg><use href="#split"/></svg></button>
    <button class="tool" disabled aria-label="Объединить"><svg><use href="#merge"/></svg></button>
    <button class="tool" disabled aria-label="Объединить атрибуты"><svg><use href="#align"/></svg></button>
    <button class="tool drop" disabled aria-label="Повернуть значки"><svg><use href="#rotsym"/></svg></button>
    <span class="grip"></span>
    <button class="tool pressed" aria-label="Прилипание"><svg><use href="#magnet"/></svg></button>
    <button class="tool" aria-label="Режим прилипания"><svg><use href="#snapv"/></svg></button>
    <button class="tool pressed" aria-label="Тип прилипания"><svg><use href="#snapdots"/></svg></button>
    <div class="spin">
        <input type="number" value="12" aria-label="Порог прилипания">
        <div class="spin-buttons">
            <button class="up" aria-label="Больше"></button>
            <button class="down" aria-label="Меньше"></button>
        </div>
    </div>
    <button class="more" aria-label="Ещё"><svg viewBox="0 0 9 8"><path d="M1 1l3 3-3 3M5 1l3 3-3 3"/></svg></button>
    <span class="grip"></span>
</div>

<div class="toolbar last">
    <button class="tool drop" disabled aria-label="Окружность"><svg><use href="#circ"/></svg></button>
    <button class="tool drop" disabled aria-label="Эллипс"><svg><use href="#ell"/></svg></button>
    <button class="tool drop" disabled aria-label="Прямоугольник"><svg><use href="#rectd"/></svg></button>
    <button class="tool drop" disabled aria-label="Многоугольник"><svg><use href="#poly"/></svg></button>
    <span class="grip"></span>
    <button class="tool" aria-label="Указать"><svg><use href="#taptool"/></svg></button>
    <span class="grip"></span>
    <button class="tool" aria-label="Сетка"><svg><use href="#redgrid"/></svg></button>
    <span class="grip"></span>
    <button class="tool drop" aria-label="Выделить"><svg><use href="#selpoly"/></svg></button>
    <button class="tool drop" aria-label="Выделить по значению"><svg><use href="#selform"/></svg></button>
    <button class="tool drop" aria-label="Снять выделение"><svg><use href="#desel"/></svg></button>
    <button class="tool" aria-label="Выделить по месту"><svg><use href="#selloc"/></svg></button>
    <span class="grip"></span>
    <button class="tool" disabled aria-label="Правка сетки"><svg><use href="#mesh"/></svg></button>
    <button class="tool drop" disabled aria-label="Выделить сетку"><svg><use href="#meshsel"/></svg></button>
    <button class="tool" disabled aria-label="Преобразовать сетку"><svg><use href="#meshrot"/></svg></button>
    <button class="tool drop" disabled aria-label="Форма сетки"><svg><use href="#meshw"/></svg></button>
    <span class="grip"></span>
    <button class="tool drop" aria-label="Слой аннотаций"><svg><use href="#textnew"/><text x="4" y="19" class="t-big">A</text></svg></button>
    <button class="tool" aria-label="Изменить аннотацию"><svg><use href="#modann"/></svg></button>
    <button class="tool" aria-label="Полигон"><svg><use href="#polyann"/></svg></button>
    <button class="tool" aria-label="Линия"><svg><use href="#lineann"/></svg></button>
    <button class="tool" aria-label="Маркер"><svg><use href="#starann"/></svg></button>
    <button class="tool" aria-label="Текст"><svg><use href="#tann"/><text x="7" y="17" class="t-serif t-t">T</text></svg></button>
    <span class="sep"></span>
    <button class="tool drop" aria-label="Выноска"><svg><use href="#balloon"/><text x="8" y="14" class="t-serif t-t">T</text></svg></button>
    <span class="grip"></span>
    <button class="tool" aria-label="Экспорт KML"><svg><use href="#kml"/><text x="12" y="11" class="t-web">KML</text></svg></button>
    <button class="tool" aria-label="Экспорт KMZ"><svg><use href="#kmz"/><text x="12" y="11" class="t-web">KMZ</text></svg></button>
    <button class="tool" aria-label="Экспорт HTML"><svg><use href="#html"/><text x="12" y="11" class="t-web">HTML</text></svg></button>
    <button class="tool" aria-label="Тайлы"><svg><use href="#tiles"/></svg></button>
    <button class="tool" aria-label="Карта"><svg><use href="#map"/></svg></button>
    <span class="grip"></span>
    <button class="tool drop" aria-label="Кольцо"><svg><use href="#oring"/></svg></button>
    <button class="tool" aria-label="Дуга по координатам"><svg><use href="#arcxy"/><text x="14" y="16" class="t-tag">XY</text></svg></button>
    <button class="tool" aria-label="Дуга по точкам"><svg><use href="#arcpts"/></svg></button>
    <button class="tool drop" aria-label="Пересечение"><svg><use href="#arcx"/></svg></button>
    <button class="tool" aria-label="Зигзаг"><svg><use href="#zig"/></svg></button>
    <button class="tool" aria-label="Полоса"><svg><use href="#band"/></svg></button>
    <button class="tool" aria-label="Нумерация"><svg><use href="#num"/><text x="12" y="11" class="t-num">123</text></svg></button>
    <button class="tool drop" aria-label="Полигоны"><svg><use href="#blobs"/></svg></button>
    <button class="tool" disabled aria-label="Азимут и расстояние"><svg><use href="#azd"/><text x="8" y="9" class="t-tiny">Az</text><text x="7" y="17" class="t-tiny">d</text></svg></button>
    <button class="tool" disabled aria-label="Линия по узлам"><svg><use href="#linen"/></svg></button>
    <span class="grip"></span>
</div>

<main class="workspace">
    <aside class="dock">
        <div class="dock-title">
            <h2>Слои</h2>
            <button class="dock-btn" aria-label="Открепить"><svg viewBox="0 0 11 11"><path d="M4.500 2.500h4v4h-4zM2.500 4.500h4v4h-4z"/></svg></button>
            <button class="dock-btn" aria-label="Закрыть"><svg viewBox="0 0 11 11"><path d="M3 3l5 5M8 3l-5 5" class="thick"/></svg></button>
        </div>
        <div class="dock-tools">
            <button class="tool" aria-label="Стили слоя"><svg><use href="#brush"/></svg></button>
            <button class="tool" aria-label="Добавить группу"><svg><use href="#groupadd"/></svg></button>
            <button class="tool" aria-label="Видимость"><svg><use href="#eye"/></svg></button>
            <button class="tool" aria-label="Фильтр"><svg><use href="#funnel"/></svg></button>
            <button class="tool drop" aria-label="Фильтр по выражению"><svg><use href="#eps"/><text x="5" y="14" class="t-eps">ε</text></svg></button>
            <button class="tool" aria-label="Развернуть всё"><svg><use href="#expand"/></svg></button>
            <button class="tool" aria-label="Свернуть всё"><svg><use href="#collapse"/></svg></button>
            <button class="tool" aria-label="Удалить слой"><svg><use href="#removel"/></svg></button>
        </div>
        <ul class="tree">
            <li class="row">
                <span class="twist open"></span>
                <input type="checkbox" id="l1" checked>
                <svg class="sym wide" viewBox="3 3 18 18"><use href="#group" width="24" height="24"/></svg>
                <label for="l1">Общие</label>
            </li>
            <li class="row level1 selected">
                <span class="twist open"></span>
                <input type="checkbox" id="l2">
                <svg class="sym" viewBox="0 0 18 18"><path d="M2 4q3-2 6 1 4-1 8-2-1 5 0 9-4 0-7-2-3 1-7 3-1-4 0-9z" fill="url(#g-blue)" stroke="#86a6cc"/></svg>
                <label for="l2">Rocks</label>
            </li>
            <li class="row level2">
                <input type="checkbox" id="l3" checked>
                <svg class="sym class" viewBox="0 0 18 18"><path d="M0 0h18v18H0z" fill="url(#p-diag)"/><path d="M.5.5h17v17H.5z" fill="none" stroke="#b02fc9" stroke-dasharray="1 1"/></svg>
                <label for="l3">эффузив</label>
            </li>
            <li class="row level2">
                <input type="checkbox" id="l4" checked aria-label="Класс">
                <svg class="sym class" viewBox="0 0 18 18"><path d="M4.500 0v18M13.500 0v18M0 4.500h18M0 11.500h18" stroke="#43b02a"/><path d="M.5 0v17.500h17V0" fill="none" stroke="#8fd57e"/></svg>
            </li>
            <li class="row leaf muted">
                <input type="checkbox" id="l5">
                <svg class="sym line" viewBox="0 0 14 18"><path d="M0 9h14" stroke="#3d8bbf" stroke-width="2"/></svg>
                <label for="l5">Gidro</label>
            </li>
            <li class="row leaf muted">
                <input type="checkbox" id="l6">
                <svg class="sym line" viewBox="0 0 14 18"><path d="M0 9h14" stroke="#9c8b64" stroke-width="2"/></svg>
                <label for="l6">Rel10</label>
            </li>
            <li class="row leaf bold">
                <input type="checkbox" id="l7" checked>
                <svg class="sym" viewBox="0 0 18 18"><path d="M2 2h14v14H2z" fill="#fff" stroke="#232323" stroke-width="2"/></svg>
                <label for="l7">Lits</label>
            </li>
            <li class="row">
                <span class="twist"></span>
                <input type="checkbox" id="l8">
                <svg class="sym wide" viewBox="3 3 18 18"><use href="#group" width="24" height="24"/></svg>
                <label for="l8">Растры</label>
            </li>
        </ul>
    </aside>
    <div class="splitter"></div>
    <section class="canvas">
        <svg width="872" height="648"><path d="M761 139L841 246 584 488 448 498 369 402z" fill="none" stroke="#232323" stroke-width="4" stroke-linejoin="round"/></svg>
    </section>
</main>
</body>
</html>
```

FILE: styles.css
```css
* {
    box-sizing: border-box;
}

body {
    margin: 0;
    height: 100vh;
    display: flex;
    flex-direction: column;
    overflow: hidden;
    background: #f0f0f0;
    color: #000;
    font: 12px "Noto Sans", "Open Sans", sans-serif;
}

button {
    padding: 0;
    border: none;
    background: none;
    font: inherit;
}

.sprite {
    position: absolute;
    width: 0;
    height: 0;
}

.titlebar {
    flex: none;
    height: 20px;
    line-height: 18px;
    background: #fff;
    font-size: 11px;
    text-indent: -2px;
}

.menubar {
    flex: none;
    height: 20px;
    padding-left: 13px;
    display: flex;
    gap: 12px;
    line-height: 20px;
    white-space: nowrap;
    border-bottom: 1px solid #d8d8d8;
}

.menubar a {
    color: #000;
    text-decoration: none;
}

/* toolbars */

.toolbar {
    flex: none;
    height: 31px;
    display: flex;
    align-items: center;
    background: linear-gradient(#fafafa, #efefef);
    border-bottom: 1px solid #b4b4b4;
}

.toolbar.shifted > :first-child {
    margin-left: -13px;
}

.toolbar.last {
    height: 30px;
}

.toolbar.last > :first-child {
    margin-left: -1px;
}

.tool {
    flex: none;
    width: 24px;
    height: 24px;
    margin-right: 1px;
    display: flex;
    align-items: center;
    border-radius: 3px;
}

.tool svg {
    flex: none;
    width: 24px;
    height: 24px;
}

.tool.drop {
    width: 36px;
}

.tool.drop::after {
    content: "";
    margin-left: 2px;
    border: 4px solid transparent;
    border-top-color: #4a4a4a;
    border-bottom: none;
}

.tool.pressed {
    background: #d9d9d9;
    box-shadow: inset 0 0 0 1px #9a9a9a;
}

.tool:disabled svg {
    opacity: .35;
    filter: grayscale(.7);
}

.tool.drop:disabled::after {
    border-top-color: #909090;
}

.grip {
    flex: none;
    width: 4px;
    height: 16px;
    margin: 0 4px 0 8px;
    display: flex;
    justify-content: space-between;
}

.grip::before, .grip::after {
    content: "";
    width: 1px;
    background: repeating-linear-gradient(#a8a8a8 0 1px, transparent 1px 3px);
}

.sep {
    flex: none;
    width: 1px;
    height: 12px;
    margin: 0 3px;
    background: #d0d0d0;
}

.spin {
    flex: none;
    width: 81px;
    height: 20px;
    display: flex;
    background: #fff;
    border: 1px solid #a8a8a8;
    border-radius: 3px;
}

.spin input {
    flex: 1;
    min-width: 0;
    padding: 0 4px;
    border: none;
    background: none;
    font: inherit;
    appearance: textfield;
}

.spin input::-webkit-inner-spin-button {
    display: none;
}

.spin-buttons {
    width: 14px;
    display: flex;
    flex-direction: column;
    justify-content: space-evenly;
    align-items: center;
    background: #f5f5f5;
    border-left: 1px solid #b4b4b4;
}

.up, .down {
    border: 4px solid transparent;
}

.up {
    border-bottom-color: #555;
    border-top: none;
}

.down {
    border-top-color: #555;
    border-bottom: none;
}

.more {
    width: 16px;
    padding-left: 7px;
}

.more svg {
    display: block;
    width: 9px;
    height: 8px;
    fill: none;
    stroke: #444;
}

/* fonts inside icons */

.t-tag, .t-tiny, .t-web, .t-num {
    font: bold 6px "DejaVu Sans", sans-serif;
    fill: #222;
    text-anchor: middle;
}

.t-red {
    fill: #d22;
}

.t-tiny {
    font-weight: normal;
}

.t-web {
    font-family: "Noto Sans", sans-serif;
    fill: #fff;
}

.t-num {
    font-size: 7px;
}

.t-serif {
    font: bold 10px "Liberation Serif", serif;
    fill: #555;
}

.t-t {
    font-size: 12px;
}

.t-info {
    font: italic bold 11px "Liberation Serif", serif;
    fill: #fff;
}

.t-big {
    font: bold 14px "Liberation Sans", sans-serif;
    fill: #2d5f93;
}

.t-eps {
    font: 18px "Liberation Serif", serif;
    fill: #6f3c86;
}

/* layers panel */

.workspace {
    flex: 1;
    min-height: 0;
    padding-top: 1px;
    display: flex;
}

.dock {
    flex: none;
    width: 319px;
    display: flex;
    flex-direction: column;
}

.dock-title {
    height: 18px;
    padding-right: 2px;
    display: flex;
    align-items: center;
    gap: 3px;
}

.dock-title h2 {
    flex: 1;
    margin: 0 0 0 -3px;
    font-size: 12px;
    font-weight: normal;
}

.dock-btn {
    width: 11px;
    height: 11px;
    border: 1px solid #666;
    border-radius: 3px;
}

.dock-btn svg {
    display: block;
    width: 11px;
    height: 11px;
    margin: -1px;
    fill: none;
    stroke: #555;
}

.dock-btn .thick {
    stroke-width: 2;
}

.dock-tools {
    height: 32px;
    margin-left: -3px;
    display: flex;
    align-items: center;
}

.tree {
    flex: 1;
    margin: 0;
    padding: 0;
    list-style: none;
    background: #fff;
    border: 1px solid #b9b9b9;
    border-width: 1px 1px 0 0;
}

.row {
    height: 18px;
    display: flex;
    align-items: center;
    line-height: 16px;
}

.row label {
    padding-top: 2px;
}

.twist {
    width: 8px;
    margin-right: 9px;
    display: flex;
}

.twist::before {
    content: "";
    margin-left: 2px;
    border: 4px solid transparent;
    border-left-color: #666;
    border-right: none;
}

.twist.open::before {
    margin-left: 0;
    border: 4px solid transparent;
    border-top-color: #555;
    border-bottom: none;
}

.level1 {
    padding-left: 20px;
}

.level2 {
    padding-left: 57px;
}

.leaf {
    padding-left: 37px;
}

.selected {
    background: #0f7ddb;
    color: #fff;
}

.selected .twist::before {
    border-top-color: #0b3f70;
}

.selected label {
    font-weight: bold;
    font-style: italic;
    text-decoration: underline;
}

.muted label {
    color: #808080;
    font-weight: bold;
    font-style: italic;
}

.bold label {
    font-weight: bold;
}

.row input {
    width: 14px;
    height: 14px;
    margin: 0 5px 0 0;
    appearance: none;
    background: #fff;
    border: 1px solid #b9b9b9;
}

.row input:checked::before {
    content: "";
    display: block;
    width: 12px;
    height: 12px;
    background: #000;
    clip-path: polygon(2px 6px, 4px 5px, 5px 8px, 9px 2px, 11px 2px, 6px 11px, 4px 11px);
}

.sym {
    flex: none;
    width: 18px;
    height: 18px;
    margin-right: 4px;
}

.sym.wide {
    margin-right: 5px;
}

.sym.class {
    margin: 0 6px 0 1px;
}

.sym.line {
    width: 14px;
    margin: 0 6px 0 1px;
}

.splitter {
    flex: none;
    width: 6px;
    display: flex;
    justify-content: center;
    align-items: center;
}

.splitter::before {
    content: "";
    width: 1px;
    height: 17px;
    margin-top: 220px;
    background: repeating-linear-gradient(#aaa 0 1px, transparent 1px 3px);
}

.canvas {
    flex: 1;
    min-width: 0;
    overflow: hidden;
    background: #fff;
    border: 1px solid #b0b0b0;
    border-width: 1px 0 0 1px;
}

.canvas svg {
    display: block;
}
```
